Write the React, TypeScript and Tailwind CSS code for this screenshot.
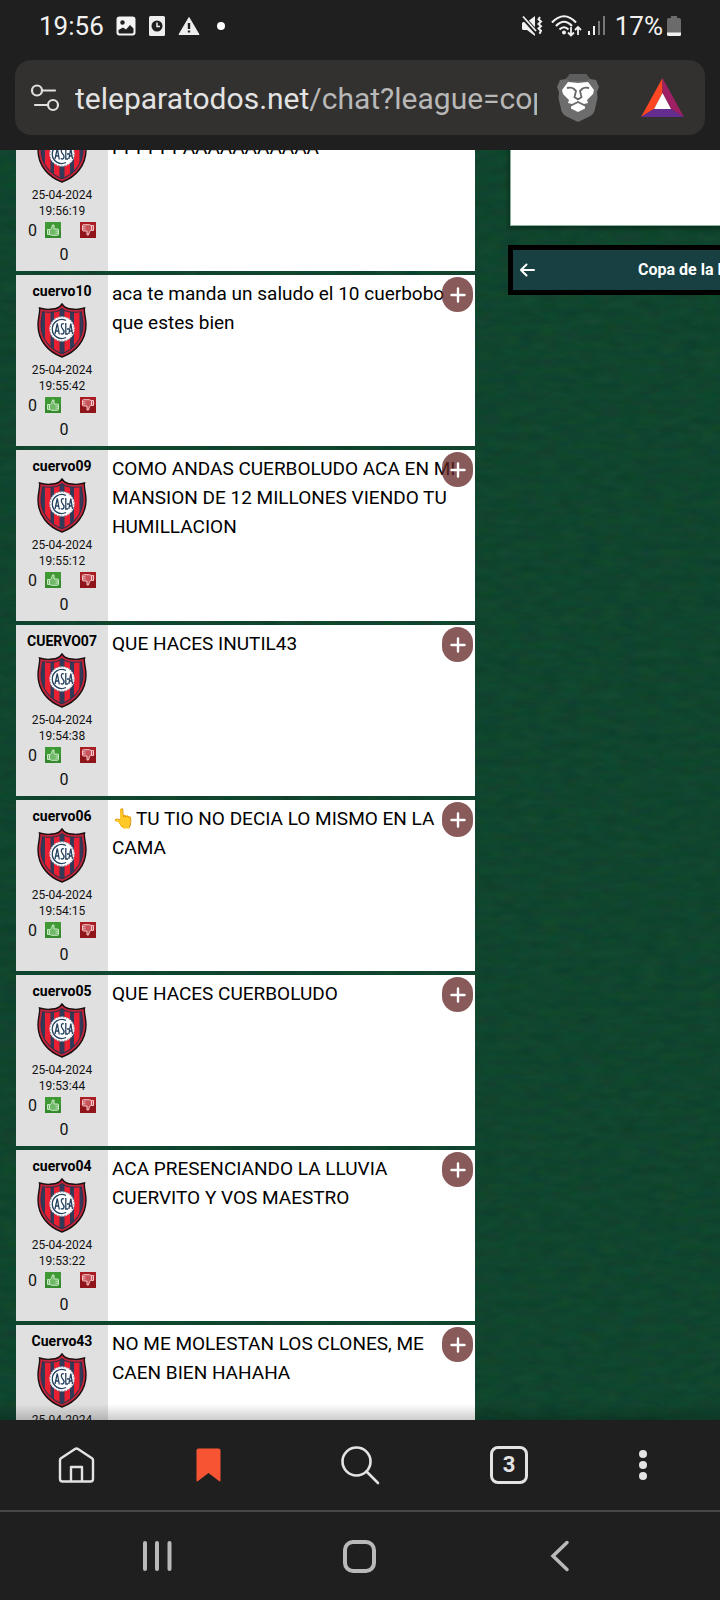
type Message = { user: string; time: string; text: string };

const messages: Message[] = [
  { user: "", time: "19:56:19", text: "\nPPPPPPAAAAAAAAAAA" },
  { user: "cuervo10", time: "19:55:42", text: "aca te manda un saludo el 10 cuerbobo que estes bien" },
  { user: "cuervo09", time: "19:55:12", text: "COMO ANDAS CUERBOLUDO ACA EN MI MANSION DE 12 MILLONES VIENDO TU HUMILLACION" },
  { user: "CUERVO07", time: "19:54:38", text: "QUE HACES INUTIL43" },
  { user: "cuervo06", time: "19:54:15", text: "👆TU TIO NO DECIA LO MISMO EN LA CAMA" },
  { user: "cuervo05", time: "19:53:44", text: "QUE HACES CUERBOLUDO" },
  { user: "cuervo04", time: "19:53:22", text: "ACA PRESENCIANDO LA LLUVIA CUERVITO Y VOS MAESTRO" },
  { user: "Cuervo43", time: "", text: "NO ME MOLESTAN LOS CLONES, ME CAEN BIEN HAHAHA" },
];

const shield = "M25 1 C27 4 31 6 35 6 C40 7 44 6 47.500 5 C46.500 9 49 14 49 22 C49 37 39 49 25 54 C11 49 1 37 1 22 C1 14 3.500 9 2.500 5 C6 6 10 7 15 6 C19 6 23 4 25 1 Z";

function Crest() {
  return (
    <svg width="50" height="55" viewBox="0 0 50 55" aria-hidden="true" className="block">
      <defs>
        <clipPath id="crest-shape">
          <path d={shield} />
        </clipPath>
      </defs>
      <g clipPath="url(#crest-shape)">
        <rect width="50" height="55" fill="#333a58" />
        {[8, 17, 27.5, 37].map((x) => (
          <rect key={x} x={x} y="0" width="5.500" height="55" fill="#ea1f31" />
        ))}
        <path d={shield} fill="none" stroke="#33304a" strokeWidth="7" />
        <path d={shield} fill="none" stroke="#c5263a" strokeWidth="5" />
      </g>
      <path d={shield} fill="none" stroke="#1a1012" strokeWidth="1.400" />
      <circle cx="25" cy="26" r="12.500" fill="#fff" />
      <circle cx="25" cy="26" r="12" fill="none" stroke="#5b6d8b" strokeWidth="0.800" strokeDasharray="1.500 1.500" />
      <g fill="none" stroke="#23405f" strokeWidth="1.300">
        <path d="M29 17.500A9.500 9.500 0 1 0 29 34.500" />
        <path d="M18 31 L20.300 20.500 L22.300 31.500 M19 28h3" />
        <path d="M27 21c-3-1.500-3.500 3-1.300 5s1.500 6.500-2 4.500" />
        <path d="M28.800 20v11h2.200M30 26h2" />
        <path d="M31.800 31 L33.800 20.500 L35.500 31 M32.300 28h3" />
      </g>
    </svg>
  );
}

function Thumb({ down = false }: { down?: boolean }) {
  return (
    <svg width="16" height="16" viewBox="0 0 16 16" aria-hidden="true" className="block">
      <rect width="16" height="16" fill={down ? "#a81e24" : "#3f9a35"} />
      <rect x="0" y="8" width="16" height="8" fill={down ? "#8f151b" : "#358a2d"} />
      <g
        transform={down ? "rotate(180 8 8)" : undefined}
        fill={down ? "#c6545a" : "#70b969"}
        stroke={down ? "#f3c9cb" : "#cdeac8"}
        strokeWidth="1"
        strokeLinejoin="round"
      >
        <path d="M2.500 7.500h2v5h-2z" />
        <path d="M4.500 8l2-1.500 1-3.500h1.500v4h3.500q1 0 1 1v4.500q0 .800-1 .800H6.500l-2-1z" />
        <path d="M10.500 9.200h2.500M10.500 11.200h2.500" strokeWidth="0.800" />
      </g>
    </svg>
  );
}

function MessageRow({ message }: { message: Message }) {
  return (
    <li className="relative flex min-h-[171px] shrink-0 bg-white">
      <div className="flex w-[92px] shrink-0 flex-col items-center bg-[#e0e0e0] pt-1.5">
        <strong className="min-h-5 text-[14px] leading-5 font-bold">{message.user}</strong>
        <div className="mt-0.5">
          <Crest />
        </div>
        <div className="mt-1 text-center text-[12px] leading-4 text-[#111]">
          <div>25-04-2024</div>
          <div className="min-h-4">{message.time}</div>
        </div>
        <div className="flex w-full items-start pl-3 text-[16px] leading-6 text-[#111]">
          <span>0</span>
          <button type="button" aria-label="Me gusta" className="mt-[3px] ml-2">
            <Thumb />
          </button>
          <button type="button" aria-label="No me gusta" className="mt-[3px] ml-[19px]">
            <Thumb down />
          </button>
        </div>
        <span className="pl-1 text-[16px] leading-6 text-[#111]">0</span>
      </div>
      <p className="min-w-0 flex-1 px-1 pt-1 text-[19px] leading-[29px] whitespace-pre-line text-black">
        {message.text}
      </p>
      <button
        type="button"
        aria-label="Opciones del mensaje"
        className="absolute top-0.5 right-0.5 flex h-[35px] w-[31px] items-center justify-center rounded-full bg-[#612323]/75"
      >
        <svg width="16" height="16" viewBox="0 0 16 16" stroke="#fff" strokeWidth="2.400" strokeLinecap="round" aria-hidden="true">
          <path d="M8 1.500v13M1.500 8h13" />
        </svg>
      </button>
    </li>
  );
}

function StatusBar() {
  return (
    <div className="flex h-[60px] items-center justify-between pr-[39px] pb-2 pl-[39px] text-[26px] leading-8 text-[#f1f1f1]">
      <div className="flex items-center">
        <span className="mr-3">19:56</span>
        <svg width="20" height="20" viewBox="0 0 20 20" aria-hidden="true">
          <rect x="0.500" y="0.500" width="19" height="19" rx="3" fill="#f4f4f4" />
          <circle cx="6.500" cy="6.500" r="2.200" fill="#1f1f1f" />
          <path d="M2.500 14l4.500-2.500 3 2 4-4.500 3.500 3.500v3.500q0 1.500-1.500 1.500h-12q-1.500 0-1.500-1.500z" fill="#1f1f1f" />
        </svg>
        <svg width="18" height="20" viewBox="0 0 18 20" aria-hidden="true" className="ml-3">
          <rect x="1" width="16" height="20" rx="1.500" fill="#eee" />
          <circle cx="9" cy="10" r="5.500" fill="#1f1f1f" />
          <path d="M9 6.500V10.500h3" fill="none" stroke="#eee" strokeWidth="1.500" />
        </svg>
        <svg width="22" height="20" viewBox="0 0 22 20" aria-hidden="true" className="ml-3">
          <path d="M11 1.500L21 18.500H1z" fill="#eee" stroke="#eee" strokeLinejoin="round" />
          <path d="M11 7v6M11 14.500v2" stroke="#1f1f1f" strokeWidth="2.400" />
        </svg>
        <span className="ml-[17px] size-2 rounded-full bg-white" />
      </div>
      <div className="flex items-center">
        <svg width="22" height="22" viewBox="0 0 22 22" aria-hidden="true">
          <path d="M1 8.500q0-1.500 1.500-1.500H6l8-6v20l-8-6H2.500Q1 15 1 13.500z" fill="#f1f1f1" />
          <path d="M0 0l17 19" stroke="#1f1f1f" strokeWidth="4.500" />
          <path d="M2 1.500l13 14.500" stroke="#f1f1f1" strokeWidth="1.800" />
          <path d="M19 2l-1.500 2.300 2.500 2.300-2.500 2.300 2.500 2.300-2.500 2.300 2.500 2.300-1.500 3" fill="none" stroke="#f1f1f1" strokeWidth="2" />
        </svg>
        <svg width="32" height="24" viewBox="0 0 32 24" fill="none" stroke="#f1f1f1" strokeWidth="2.200" aria-hidden="true" className="ml-2">
          <path d="M1 8.500Q13-4 25 8.500M5 12Q13 3.500 21 12M8.500 15.500Q13 11 17.500 15.500" />
          <circle cx="13" cy="18.500" r="2" fill="#f1f1f1" stroke="none" />
          <path d="M20 13v8M17 18.500l3 3 3-3M27 21v-8M24 16l3-3 3 3" strokeWidth="1.800" />
        </svg>
        <svg width="20" height="20" viewBox="0 0 20 20" aria-hidden="true" className="ml-1">
          <rect x="1" y="15" width="2" height="4" fill="#f1f1f1" />
          <rect x="6" y="10" width="2" height="9" fill="#f1f1f1" />
          <rect x="11" y="5" width="2" height="14" fill="#777" />
          <rect x="16" y="0" width="2" height="19" fill="#777" />
        </svg>
        <span className="ml-2">17%</span>
        <svg width="14" height="22" viewBox="0 0 14 22" aria-hidden="true" className="ml-1">
          <path d="M4 1h6v2h2q2 0 2 2v14.500q0 1.500-2 1.500H2q-2 0-2-1.500V5q0-2 2-2h2z" fill="#6b6b6b" />
          <path d="M0 17.500h14v2q0 1.500-2 1.500H2q-2 0-2-1.500z" fill="#f1f1f1" />
        </svg>
      </div>
    </div>
  );
}

function AddressBar() {
  return (
    <div className="mx-[15px] flex h-[75px] items-center rounded-2xl bg-[#32312f] pr-[21px] pl-[15px]">
      <button type="button" aria-label="Información del sitio">
        <svg width="30" height="28" viewBox="0 0 30 28" fill="none" stroke="#e0e0e0" strokeWidth="2.200" strokeLinecap="round" aria-hidden="true" className="block">
          <circle cx="7" cy="6.500" r="5" />
          <path d="M12 6.500h13M5 21h12" />
          <circle cx="23" cy="21" r="5" />
        </svg>
      </button>
      <a
        href="#chat"
        className="ml-[15px] min-w-0 flex-1 overflow-hidden pt-0.5 text-[30px] leading-10 whitespace-nowrap text-[#b8b8b8]"
      >
        <span className="text-[#e3e3e3]">teleparatodos.net</span>/chat?league=cop
      </a>
      <button type="button" aria-label="Escudos" className="ml-5">
        <svg width="42" height="48" viewBox="0 0 42 48" aria-hidden="true" className="block">
          <path d="M13 0h16l4 5 6 1 3 7-2 5 .5 6-3 13q-1 3-4 5L21 48 8.500 42q-3-2-4-5L1.500 24 2 18 0 13 3 6l6-1z" fill="#6d6d6d" />
          <path d="M13 0h16l4 5-4 2H13L9 5z" fill="#5d5d5d" />
          <path d="M11 8l10 1 10-1 6 8-1 4-6 6 1 3-4 1-6-3-6 3-4-1 1-3-6-6-1-4z" fill="#fff" />
          <path d="M21 29l7 3.500v2L21 38l-7-3.500v-2z" fill="#fff" />
          <path d="M10 14q5-1 7 1l2 2-1.500 6 3.500 2.500 3.500-2.500L23 17l2-2q2-2 7-1" fill="none" stroke="#666" strokeWidth="1.800" />
        </svg>
      </button>
      <button type="button" aria-label="Recompensas" className="ml-[42px]">
        <svg width="43" height="40" viewBox="0 0 43 40" aria-hidden="true" className="block">
          <path d="M21.500 0L0 39l13-8 8.500-16z" fill="#ff4724" />
          <path d="M21.500 0L43 39l-13-8-8.500-16z" fill="#9e1f63" />
          <path d="M0 39h43l-13-8H13z" fill="#662d91" />
          <path d="M21.500 15L13 31h17z" fill="#fff" />
        </svg>
      </button>
    </div>
  );
}

function Texture() {
  return (
    <svg className="absolute inset-0 h-full w-full" aria-hidden="true">
      <filter id="felt" x="0" y="0" width="100%" height="100%" colorInterpolationFilters="sRGB">
        <feTurbulence type="fractalNoise" baseFrequency="0.05 0.12" numOctaves="4" seed="4" />
        <feColorMatrix values="0.06 0 0 0 0.033  0 0.06 0 0 0.24  0 0 0.06 0 0.15  0 0 0 0 1" />
      </filter>
      <rect width="100%" height="100%" filter="url(#felt)" />
    </svg>
  );
}

export default function App() {
  return (
    <div className="flex h-screen min-h-[480px] flex-col overflow-hidden bg-[#1f1f1f] font-['Roboto',sans-serif]">
      <header className="h-[150px] shrink-0">
        <StatusBar />
        <AddressBar />
      </header>

      <main className="relative min-h-0 flex-1 overflow-hidden bg-[#10442c]">
        <Texture />
        <div className="relative flex h-full gap-[33px] overflow-hidden pl-4">
          <ul className="-mt-[50px] flex min-w-0 flex-1 flex-col gap-1">
            {messages.map((message, index) => (
              <MessageRow key={index} message={message} />
            ))}
          </ul>
          <aside className="w-[212px] shrink-0">
            <div className="ml-0.5 h-[76px] border-b border-l border-[#8bb39d] bg-white shadow-[0_1px_4px_2px_rgba(0,0,0,0.3)]" />
            <div className="mt-[19px] flex h-[50px] items-center overflow-hidden border-y-[5px] border-l-[5px] border-black bg-[#183f42] pl-[7px] text-white">
              <button type="button" aria-label="Volver">
                <svg width="15" height="14" viewBox="0 0 15 14" fill="none" stroke="#fff" strokeWidth="2" strokeLinecap="round" aria-hidden="true" className="block">
                  <path d="M14 7H1M6.500 1.500L1 7l5.500 5.500" />
                </svg>
              </button>
              <h2 className="ml-[103px] text-[16px] leading-6 font-bold whitespace-nowrap">Copa de la Liga</h2>
            </div>
          </aside>
        </div>
        <div className="absolute inset-x-0 bottom-0 h-4 bg-linear-to-t from-black/20 to-transparent" />
      </main>

      <nav
        aria-label="Navegador"
        className="grid h-[90px] shrink-0 grid-cols-[151fr_116fr_186fr_112fr_155fr] items-center justify-items-center text-[#e3e3e3]"
      >
        <button type="button" aria-label="Inicio">
          <svg width="38" height="38" viewBox="0 0 38 38" fill="none" stroke="currentColor" strokeWidth="2.400" strokeLinejoin="round" aria-hidden="true" className="block">
            <path d="M3 14q0-1 1-1.800L18 3q1.500-1 3 0l14 9.200q1 .8 1 1.800v19q0 2.500-2.500 2.500h-28Q3 35.500 3 33z" />
            <path d="M14 35.500V21h11v14.500" />
          </svg>
        </button>
        <button type="button" aria-label="Marcadores">
          <svg width="26" height="34" viewBox="0 0 26 34" aria-hidden="true" className="block">
            <path d="M2.500 0.500h20q2 0 2 2v30q0 1.500-1.500.500L12.500 25 2 33q-1.500 1-1.500-.500v-30q0-2 2-2z" fill="#f75434" />
          </svg>
        </button>
        <button type="button" aria-label="Buscar">
          <svg width="40" height="40" viewBox="0 0 40 40" fill="none" stroke="currentColor" strokeWidth="2.600" strokeLinecap="round" aria-hidden="true" className="block">
            <circle cx="16.500" cy="16.500" r="14" />
            <path d="M26.500 26.500L38 38" />
          </svg>
        </button>
        <button
          type="button"
          aria-label="3 pestañas"
          className="flex size-[38px] items-center justify-center rounded-lg border-[3px] border-[#e3e3e3] text-[22px] leading-6 font-bold"
        >
          3
        </button>
        <button type="button" aria-label="Más">
          <svg width="24" height="32" viewBox="0 0 24 32" fill="currentColor" aria-hidden="true" className="block">
            <circle cx="12" cy="5" r="4" />
            <circle cx="12" cy="16" r="4" />
            <circle cx="12" cy="27" r="4" />
          </svg>
        </button>
      </nav>

      <nav aria-label="Sistema" className="flex h-[90px] shrink-0 items-center justify-between border-t-2 border-[#474747] pr-[150px] pl-[142px] text-[#b9b9b9]">
        <button type="button" aria-label="Recientes">
          <svg width="30" height="32" viewBox="0 0 30 32" stroke="currentColor" strokeWidth="4" strokeLinecap="round" aria-hidden="true" className="block">
            <path d="M3 3v26M15 3v26M27.500 3v26" />
          </svg>
        </button>
        <button type="button" aria-label="Pantalla principal" className="mr-1 size-[33px] rounded-[10px] border-4 border-[#b9b9b9]" />
        <button type="button" aria-label="Atrás">
          <svg width="20" height="32" viewBox="0 0 20 32" fill="none" stroke="currentColor" strokeWidth="3.500" strokeLinecap="round" aria-hidden="true" className="block">
            <path d="M17 2.500L3 16l14 13.500" />
          </svg>
        </button>
      </nav>
    </div>
  );
}
